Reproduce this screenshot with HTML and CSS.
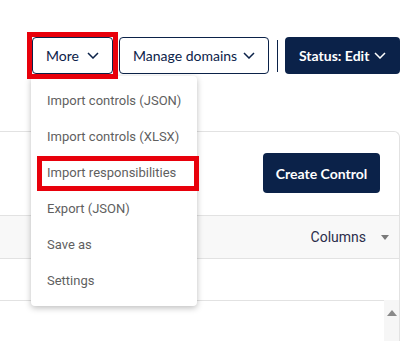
FILE: index.html
```html
<!DOCTYPE html>
<html lang="en">
<head>
  <meta charset="UTF-8" />
  <title>Controls</title>
  <link rel="stylesheet" href="styles.css">
</head>
<body>
  <header class="toolbar">
    <button class="btn btn-outline" id="more-btn">More
      <svg class="chev" viewBox="0 0 12 7"><path d="M1 1L6 6L11 1"/></svg>
    </button>
    <button class="btn btn-outline" id="domains-btn">Manage domains
      <svg class="chev" viewBox="0 0 12 7"><path d="M1 1L6 6L11 1"/></svg>
    </button>
    <span class="divider"></span>
    <button class="btn btn-solid" id="status-btn">Status: Edit
      <svg class="chev" viewBox="0 0 12 7"><path d="M1 1L6 6L11 1"/></svg>
    </button>
  </header>

  <section class="card">
    <div class="card-head">
      <button class="btn btn-solid create-btn">Create Control</button>
    </div>
    <div class="grid-tools">
      <span class="columns">Columns <span class="caret"></span></span>
    </div>
    <div class="grid-row"></div>
    <div class="grid-body">
      <div class="scroll-track"><span class="scroll-up"></span></div>
    </div>
  </section>

  <!-- dropdown for More -->
  <ul class="menu">
    <li>Import controls (JSON)</li>
    <li>Import controls (XLSX)</li>
    <li>Import responsibilities</li>
    <li>Export (JSON)</li>
    <li>Save as</li>
    <li>Settings</li>
  </ul>

  <!-- highlight marks -->
  <div class="mark mark-more"></div>
  <div class="mark mark-item"></div>
</body>
</html>
```

FILE: styles.css
```css
* {
  box-sizing: border-box;
}

html, body {
  overflow: hidden;
}

body {
  margin: 0;
  height: 341px;
  background-color: white;
  font-family: Lato, "Liberation Sans", sans-serif;
  position: relative;
}

.toolbar {
  display: flex;
  align-items: center;
  padding: 37px 6px 0 32px;
  height: 74px;
}

.btn {
  height: 37px;
  border-radius: 4px;
  font-family: Lato, sans-serif;
  font-size: 14px;
  display: flex;
  align-items: center;
  padding: 0 13px;
  white-space: nowrap;
  flex-shrink: 0;
  cursor: pointer;
}

.btn-outline {
  background-color: white;
  color: #0b2249;
  border: 1px solid #0b2249;
}

#more-btn {
  width: 81px;
  margin-right: 6px;
}

#domains-btn {
  width: 150px;
}

.btn-solid {
  background-color: #0b2249;
  color: white;
  border: none;
  font-weight: bold;
}

#status-btn {
  width: 115px;
  padding: 0 14px;
}

.chev {
  width: 12px;
  height: 7px;
  margin-left: auto;
  fill: none;
  stroke: currentColor;
  stroke-width: 1.5;
}

.divider {
  width: 1px;
  height: 32px;
  background-color: #0b2249;
  margin: 0 7px 0 8px;
  flex-shrink: 0;
}

.card {
  margin: 57px 6px 0 -10px;
  border: 1px solid #e2e2e2;
  border-bottom: none;
  border-radius: 6px 6px 0 0;
  height: 210px;
}

.card-head {
  display: flex;
  justify-content: flex-end;
  padding: 21px 19px 0 0;
  height: 83px;
}

.create-btn {
  height: 40px;
  width: 117px;
  padding: 0;
  justify-content: center;
}

.grid-tools {
  height: 44px;
  background-color: #f8f8f8;
  border-top: 1px solid #e2e2e2;
  border-bottom: 1px solid #e2e2e2;
  display: flex;
  align-items: center;
  justify-content: flex-end;
  padding-right: 10px;
}

.columns {
  font-family: Roboto, sans-serif;
  font-size: 14px;
  color: #2b2d4a;
  display: flex;
  align-items: center;
}

.caret {
  width: 0;
  height: 0;
  border-left: 4px solid transparent;
  border-right: 4px solid transparent;
  border-top: 5px solid #7a7a7a;
  margin-left: 15px;
}

.grid-row {
  height: 42px;
  border-bottom: 1px solid #e2e2e2;
  margin-right: 14px;
}

.grid-body {
  display: flex;
  justify-content: flex-end;
  margin-top: -1px;
}

.scroll-track {
  width: 15px;
  height: 42px;
  background-color: #f6f6f6;
  display: flex;
  justify-content: center;
  padding-top: 10px;
}

.scroll-up {
  width: 0;
  height: 0;
  border-left: 5px solid transparent;
  border-right: 5px solid transparent;
  border-bottom: 6px solid #8a8a8a;
}

.menu {
  position: absolute;
  top: 76px;
  left: 31px;
  width: 166px;
  margin: 0;
  padding: 6px 0 8px;
  list-style: none;
  background-color: white;
  border-radius: 4px;
  box-shadow: 0 2px 6px rgba(0, 0, 0, 0.26);
  z-index: 5;
}

.menu li {
  height: 36px;
  display: flex;
  align-items: center;
  padding-left: 16px;
  font-family: Roboto, sans-serif;
  font-size: 13px;
  color: #5f5f5f;
}

.mark {
  position: absolute;
  border: 5px solid #e8000b;
  z-index: 10;
}

.mark-more {
  left: 27px;
  top: 32px;
  width: 91px;
  height: 47px;
}

.mark-item {
  left: 37px;
  top: 156px;
  width: 162px;
  height: 35px;
}
```
